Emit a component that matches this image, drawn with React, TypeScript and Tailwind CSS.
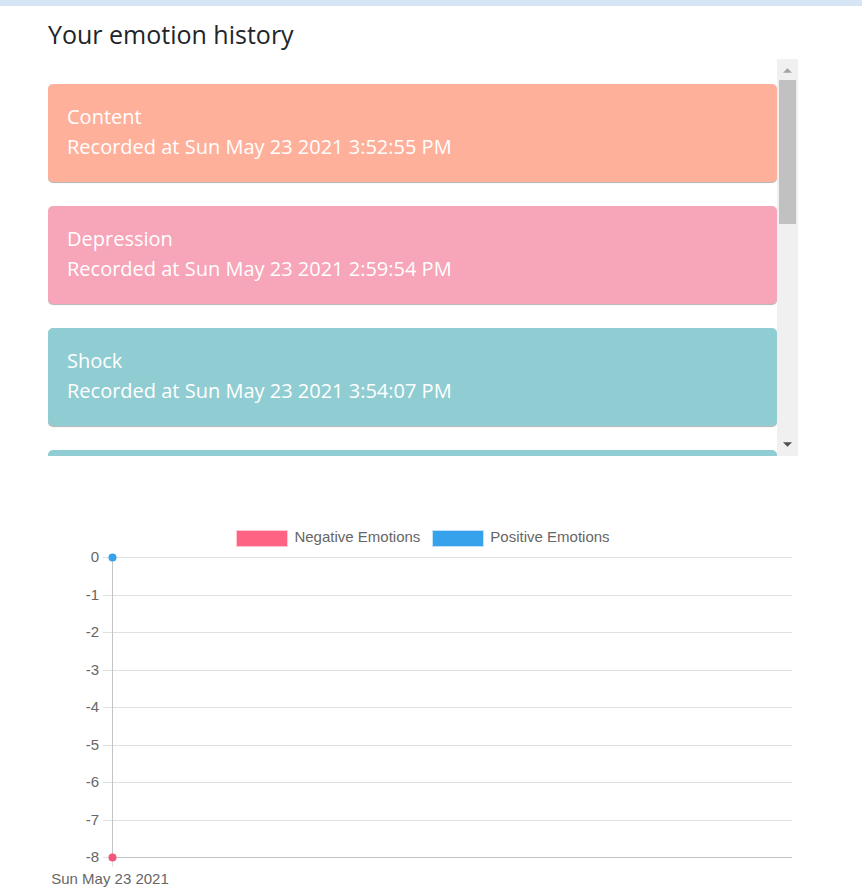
import { useRef } from "react";

type Emotion = { id: number; name: string; recorded: string; color: string };

const emotions: Emotion[] = [
  { id: 1, name: "Content", recorded: "Sun May 23 2021 3:52:55 PM", color: "bg-[#ffb09b]" },
  { id: 2, name: "Depression", recorded: "Sun May 23 2021 2:59:54 PM", color: "bg-[#f7a5b8]" },
  { id: 3, name: "Shock", recorded: "Sun May 23 2021 3:54:07 PM", color: "bg-[#8fcdd3]" },
  { id: 4, name: "Shock", recorded: "Sun May 23 2021 3:54:07 PM", color: "bg-[#8fcdd3]" },
];

const series = [
  { label: "Negative Emotions", swatch: "bg-[#ff6384] border-[#ffc9d4]", fill: "#f2587b", value: -8 },
  { label: "Positive Emotions", swatch: "bg-[#36a2eb] border-[#bfe1f9]", fill: "#36a2eb", value: 0 },
];

const ticks = [0, -1, -2, -3, -4, -5, -6, -7, -8];
const yFor = (value: number) => 17 + Math.round(-value * 37.5);

function EmotionCard({ emotion }: { emotion: Emotion }) {
  return (
    <li
      className={`shrink-0 rounded-[5px] px-[19px] pt-[18px] pb-5 text-xl leading-[30px] text-white shadow-[0_1px_1px_rgba(0,0,0,0.3)] ${emotion.color}`}
    >
      <p>{emotion.name}</p>
      <p>Recorded at {emotion.recorded}</p>
    </li>
  );
}

function EmotionHistory() {
  const list = useRef<HTMLUListElement>(null);
  const scroll = (top: number) => list.current?.scrollBy({ top });

  return (
    <div className="flex h-[397px]">
      <ul
        ref={list}
        className="flex flex-1 flex-col gap-6 overflow-y-auto pt-[25px] [scrollbar-width:none]"
      >
        {emotions.map((emotion) => (
          <EmotionCard key={emotion.id} emotion={emotion} />
        ))}
      </ul>
      <div className="flex w-[21px] flex-col items-center bg-[#f0f0f0]">
        <button
          type="button"
          aria-label="Scroll up"
          onClick={() => scroll(-40)}
          className="flex h-[21px] w-full items-center justify-center"
        >
          <svg width="9" height="5" viewBox="0 0 10 5" className="mt-[2px]" aria-hidden="true">
            <path d="M5 0 10 5H0Z" fill="#a3a3a3" />
          </svg>
        </button>
        <div className="h-36 w-[17px] bg-[#c1c1c1]" />
        <button
          type="button"
          aria-label="Scroll down"
          onClick={() => scroll(40)}
          className="mt-auto flex h-[21px] w-full items-center justify-center"
        >
          <svg width="9" height="5" viewBox="0 0 10 5" className="mb-[2px]" aria-hidden="true">
            <path d="M0 0H10L5 5Z" fill="#505050" />
          </svg>
        </button>
      </div>
    </div>
  );
}

function EmotionChart() {
  return (
    <figure className="mt-[70px] font-['Liberation_Sans',Arial,sans-serif] text-[15px] text-[#666]">
      <figcaption className="flex h-[22px] items-center justify-center gap-3">
        {series.map((s) => (
          <span key={s.label} className="flex items-center gap-[6px]">
            <span className={`mt-[2px] h-[17px] w-[52px] border ${s.swatch}`} />
            <span>{s.label}</span>
          </span>
        ))}
      </figcaption>
      <div className="-mt-2 pr-[6px]">
        <svg className="block w-full overflow-visible" height="352" role="img" aria-label="Emotions by date">
          {ticks.map((tick) => (
            <g key={tick}>
              <rect x="55" y={yFor(tick)} width="10" height="1" fill="#e0e0e0" />
              <line
                x1="65"
                x2="100%"
                y1={yFor(tick) + 0.5}
                y2={yFor(tick) + 0.5}
                stroke={tick === -8 ? "#c4c4c4" : "#e0e0e0"}
              />
              <text x="51" y={yFor(tick) + 5} textAnchor="end" fill="currentColor">
                {tick}
              </text>
            </g>
          ))}
          <rect x="64" y="17" width="1" height="300" fill="#c4c4c4" />
          <rect x="64" y="317" width="1" height="10" fill="#e0e0e0" />
          {series.map((s) => (
            <circle key={s.label} cx="64.5" cy={yFor(s.value) + 0.5} r="4" fill={s.fill} />
          ))}
          <text x="62" y="344" textAnchor="middle" fill="currentColor">
            Sun May 23 2021
          </text>
        </svg>
      </div>
    </figure>
  );
}

export default function App() {
  return (
    <div className="bg-white font-['Open_Sans',sans-serif]">
      <div className="h-[6px] bg-[#d6e5f6]" />
      <main className="pr-16 pl-12">
        <h1 className="pt-[10px] pb-[7px] text-[25px] leading-9 text-[#212529]">Your emotion history</h1>
        <EmotionHistory />
        <EmotionChart />
      </main>
    </div>
  );
}
